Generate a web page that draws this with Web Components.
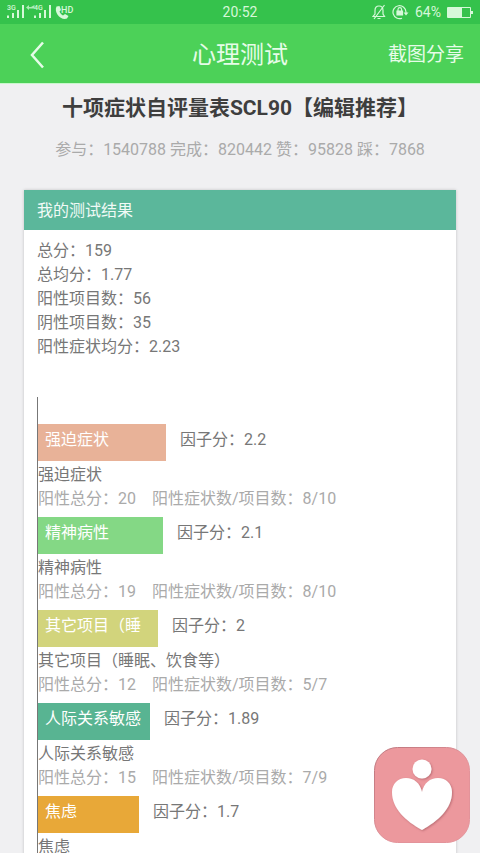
<!DOCTYPE html>
<html lang="zh-CN">
<head>
<meta charset="utf-8">
<meta name="viewport" content="width=device-width, initial-scale=1">
<title>心理测试</title>
<style>
  body { margin: 0; background: #f0f0f2; color: #777; font: 16px/24px Roboto, "Noto Sans CJK SC", sans-serif; }
</style>
</head>
<body>
<test-page></test-page>
<script>
function define(name, html, init) {
  const template = document.createElement('template');
  template.innerHTML = html;
  customElements.define(name, class extends HTMLElement {
    constructor() {
      super();
      this.attachShadow({ mode: 'open' }).append(template.content.cloneNode(true));
    }
    connectedCallback() { if (init) init(this, this.shadowRoot); }
  });
}

define('status-bar', `
  <style>
    :host { display: grid; grid-template-columns: 1fr auto 1fr; align-items: center; height: 24px; padding: 0 7px; background: #35c24c; color: #d6f8d9; font-size: 14px; line-height: 24px; }
    svg { display: block; }
    .right { display: flex; justify-content: flex-end; align-items: center; gap: 6px; }
  </style>
  <svg width="70" height="20" viewBox="0 0 70 20" fill="currentColor" font-family="Roboto, sans-serif" aria-hidden="true">
    <text x="0" y="8" font-size="7" font-weight="500">3G</text>
    <path d="M0 13.500h2v2.500H0zM5 11h2v5H5zM10 8h2v8h-2zM15 3h2v13h-2z"/>
    <path d="M19 5.500l3-2.500v2h5v1.500h-5V8zM27.500 3v4L24 5z" opacity=".75"/>
    <text x="27" y="8" font-size="7" font-weight="500">4G</text>
    <path d="M27 13.500h2v2.500h-2zM32 11h2v5h-2zM37 8h2v8h-2zM42 3h2v13h-2z"/>
    <path d="M49.500 4.500l3-.5 1.500 4-1.500 1.500c.7 1.800 1.800 3 3.500 4l2-1.500 3.500 2-1.500 2.500c-6 2.500-13.500-6-10.500-12z"/>
    <text x="54" y="11" font-size="9" font-weight="500">HD</text>
  </svg>
  <time>20:52</time>
  <div class="right">
    <svg width="14" height="16" viewBox="0 0 14 16" fill="none" stroke="currentColor" stroke-width="1.200" aria-hidden="true"><path d="M1 12.500h11.500L11 10V6.500C11 3.500 9.500 2 7 2S3 3.500 3 6.500V10zM5.500 14.500h3M2 15L12.500 1"/></svg>
    <svg width="17" height="16" viewBox="0 0 17 16" fill="none" stroke="currentColor" stroke-width="1.200" aria-hidden="true"><path d="M10 14.200A6.500 6.500 0 1 1 14 8v1"/><path d="M11.500 8.500h5L14 11.500z" fill="currentColor" stroke="none"/><path d="M5 7h5.500v4H5z" fill="currentColor"/><path d="M6 7V5.500a1.800 1.800 0 0 1 3.600 0V7"/></svg>
    <span>64%</span>
    <svg width="26" height="13" viewBox="0 0 26 13" fill="none" stroke="currentColor" aria-hidden="true"><path d="M.5 1.500h23v10H.5z"/><path d="M1 2h14v9H1zM24 5h2v3h-2z" fill="currentColor" stroke="none"/></svg>
  </div>`);

define('nav-bar', `
  <style>
    :host { display: grid; grid-template-columns: 1fr auto 1fr; align-items: center; height: 60px; padding: 2px 16px 0; background: #4cd158; color: #e6fce8; border-bottom: 1px solid #c9f7cc; box-sizing: border-box; }
    h1 { margin: 0; font-size: 24px; line-height: 32px; font-weight: 400; }
    button { border: 0; padding: 0; background: none; color: inherit; font: inherit; font-size: 19px; line-height: 32px; cursor: pointer; }
    .back { justify-self: start; padding-left: 8px; }
    .share { justify-self: end; }
    svg { display: block; }
  </style>
  <button class="back" aria-label="返回"><svg width="26" height="28" viewBox="0 0 26 28" fill="none" stroke="currentColor" stroke-width="2.500"><path d="M19 1.500L8 14l11 12.500"/></svg></button>
  <h1><slot></slot></h1>
  <button class="share">截图分享</button>`);

define('test-heading', `
  <style>
    :host { display: block; text-align: center; padding: 8px 0 28px; }
    h2 { margin: 0; color: #3e3e3e; font-size: 21px; line-height: 32px; font-weight: 700; }
    p { margin: 14px 0 0; color: #aaa; }
  </style>
  <h2><slot name="title"></slot></h2>
  <p><slot></slot></p>`);

define('result-card', `
  <style>
    :host { display: block; margin: 0 24px; background: #fff; box-shadow: 0 0 3px #0003; }
    h3 { margin: 0; padding: 9px 13px 7px; background: #5bb79b; color: #f0faf6; font-size: 16px; line-height: 24px; font-weight: 400; }
    .body { padding: 9px 13px; }
  </style>
  <h3><slot name="title"></slot></h3>
  <div class="body"><slot></slot></div>`);

define('factor-chart', `
  <style>
    :host { display: grid; gap: 6px; margin-top: 38px; padding-top: 27px; border-left: 1px solid #777; }
  </style>
  <slot></slot>`);

define('factor-row', `
  <style>
    :host { display: block; }
    .line { display: flex; gap: 14px; margin-bottom: 2px; }
    .bar { box-sizing: border-box; flex: none; height: 37px; padding: 4px 8px 9px 7px; color: #fff; white-space: nowrap; }
    .score { padding-top: 4px; }
    .detail { display: flex; gap: 16px; color: #aaa; white-space: nowrap; }
  </style>
  <div class="line"><div class="bar"></div><div class="score"></div></div>
  <div class="name"></div>
  <div class="detail"><slot></slot></div>`,
  (host, root) => {
    const bar = root.querySelector('.bar');
    const name = host.getAttribute('name');
    bar.style.background = host.getAttribute('color');
    bar.style.width = host.getAttribute('length') + 'px';
    // A bar has room for six characters of the name.
    bar.textContent = name.slice(0, 6);
    root.querySelector('.name').textContent = name;
    root.querySelector('.score').textContent = '因子分：' + host.getAttribute('score');
  });

define('heart-button', `
  <style>
    :host { position: fixed; right: 10px; bottom: 10px; }
    button { display: block; border: 0; padding: 0; background: none; cursor: pointer; }
    svg { display: block; }
  </style>
  <button aria-label="心理测试"><svg width="96" height="96" viewBox="0 0 96 96">
    <defs>
      <filter id="soft" x="-20%" y="-20%" width="140%" height="140%"><feDropShadow dx="1" dy="1" stdDeviation="1" flood-color="#9b5058" flood-opacity=".6"/></filter>
      <linearGradient id="edge" x2="1" y2="1"><stop stop-color="#bb747b"/><stop offset=".6" stop-color="#e3939a"/></linearGradient>
    </defs>
    <rect x=".5" y=".5" width="95" height="95" rx="23" fill="#ec989d" stroke="url(#edge)"/>
    <g fill="#fff" filter="url(#soft)"><circle cx="48" cy="22" r="9.500"/><path d="M48 45C46 36 40 31 32 31c-8 0-14 6-14 14 0 17 14 29 30 38 16-9 30-21 30-38 0-8-6-14-14-14-8 0-14 5-16 14z"/></g>
  </svg></button>`);

define('test-page', `
  <style>
    :host { display: flex; flex-direction: column; height: 100vh; overflow: hidden; }
    main { flex: 1; min-height: 0; overflow-y: auto; scrollbar-width: none; }
  </style>
  <status-bar></status-bar>
  <nav-bar>心理测试</nav-bar>
  <main>
    <test-heading><span slot="title">十项症状自评量表SCL90【编辑推荐】</span>参与：1540788 完成：820442 赞：95828 踩：7868</test-heading>
    <result-card>
      <span slot="title">我的测试结果</span>
      <div>总分：159</div>
      <div>总均分：1.77</div>
      <div>阳性项目数：56</div>
      <div>阴性项目数：35</div>
      <div>阳性症状均分：2.23</div>
      <factor-chart>
        <factor-row name="强迫症状" score="2.2" length="128" color="#e8b298"><span>阳性总分：20</span><span>阳性症状数/项目数：8/10</span></factor-row>
        <factor-row name="精神病性" score="2.1" length="125" color="#84d885"><span>阳性总分：19</span><span>阳性症状数/项目数：8/10</span></factor-row>
        <factor-row name="其它项目（睡眠、饮食等）" score="2" length="120" color="#d2d47c"><span>阳性总分：12</span><span>阳性症状数/项目数：5/7</span></factor-row>
        <factor-row name="人际关系敏感" score="1.89" length="112" color="#58b492"><span>阳性总分：15</span><span>阳性症状数/项目数：7/9</span></factor-row>
        <factor-row name="焦虑" score="1.7" length="101" color="#e8a838"></factor-row>
      </factor-chart>
    </result-card>
  </main>
  <heart-button></heart-button>`);
</script>
</body>
</html>
